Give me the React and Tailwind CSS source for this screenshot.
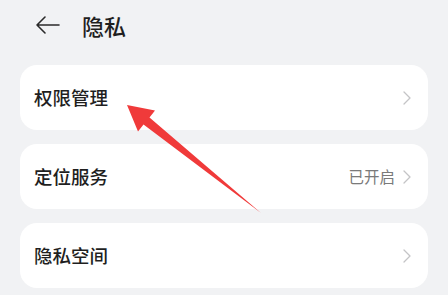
import React from 'react';

const Chevron = () => (
  <svg width="8" height="14" viewBox="0 0 8 14" fill="none" className="shrink-0">
    <path d="M1 1l6 6-6 6" stroke="#c4c4c6" strokeWidth="1.3" strokeLinecap="round" strokeLinejoin="round" />
  </svg>
);

const Row = ({ label, value }) => (
  <div className="flex h-[65px] items-center justify-between rounded-[17px] bg-white pl-[14px] pr-[17px]">
    <span className="text-[18.5px] font-medium text-[#1f1f1f]">{label}</span>
    <div className="flex items-center gap-[8px]">
      {value && <span className="text-[15.5px] text-[#7a7a7a]">{value}</span>}
      <Chevron />
    </div>
  </div>
);

export default function App() {
  return (
    <div
      className="relative h-[295px] w-[448px] overflow-hidden bg-[#f1f2f4]"
      style={{ fontFamily: '"Noto Sans CJK SC", "Noto Sans", sans-serif' }}
    >
      {/* Header */}
      <div className="flex h-[52px] items-center pl-[35px] pb-[2px]">
        <svg width="26" height="20" viewBox="0 0 26 20" fill="none">
          <path d="M24 10H2M10 2L2 10l8 8" stroke="#2a2a2a" strokeWidth="1.6" strokeLinecap="round" strokeLinejoin="round" />
        </svg>
        <span className="ml-[21px] text-[22px] font-medium text-[#1f1f1f]">隐私</span>
      </div>

      {/* List */}
      <div className="flex flex-col gap-[14px] px-[20px] pt-[13px]">
        <Row label="权限管理" />
        <Row label="定位服务" value="已开启" />
        <Row label="隐私空间" />
      </div>

      {/* Annotation arrow */}
      <svg className="pointer-events-none absolute inset-0" width="448" height="295" viewBox="0 0 448 295">
        <polygon
          points="127,105 155,110.5 149.5,117.5 261,213 143.5,124.5 138,131.5"
          fill="#f03a3a"
        />
      </svg>
    </div>
  );
}
